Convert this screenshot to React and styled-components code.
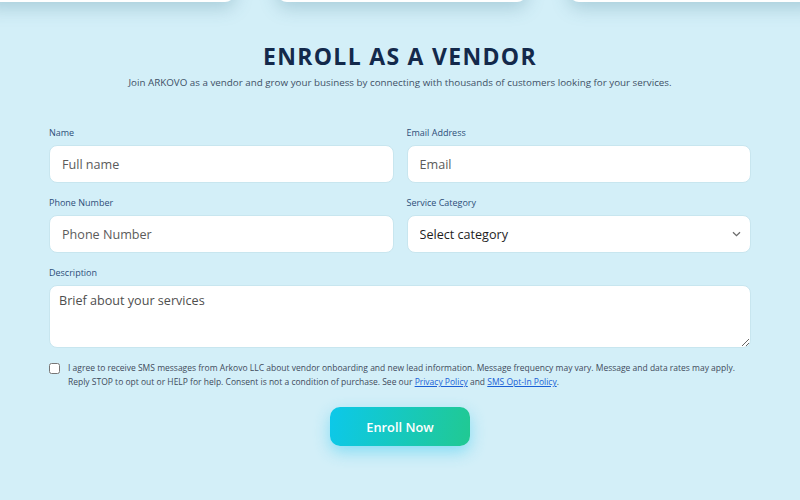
import React from 'react'
import styled, { createGlobalStyle } from 'styled-components'

const Global = createGlobalStyle`
  html, body { margin: 0; padding: 0; }
  body {
    background: #d3eff8;
    font-family: "Open Sans", "Liberation Sans", sans-serif;
    overflow: hidden;
  }
`

const Page = styled.div`
  width: 800px;
  height: 500px;
  background: #d3eff8;
  overflow: hidden;
`

const CardRow = styled.div`
  display: grid;
  grid-template-columns: 252px 250px 252px;
  gap: 42px;
  margin: -60px 0 0 -17px;
`

const TopCard = styled.div`
  height: 62px;
  background: #ffffff;
  border-radius: 10px;
  box-shadow: 0 6px 18px rgba(60, 120, 140, 0.28);
`

const Section = styled.section`
  padding: 34px 49px 0 49px;
`

const Title = styled.h2`
  margin: 0;
  text-align: center;
  font-family: "Open Sans", sans-serif;
  font-weight: 700;
  font-size: 23px;
  letter-spacing: 1.3px;
  color: #13294b;
  line-height: 40px;
`

const Subtitle = styled.p`
  margin: 0;
  text-align: center;
  font-size: 9.8px;
  color: #3e4f66;
  line-height: 14px;
`

const Form = styled.form`
  margin-top: 36px;
  display: grid;
  grid-template-columns: 1fr 1fr;
  column-gap: 13px;
  row-gap: 13px;
`

const Field = styled.div`
  display: flex;
  flex-direction: column;
  grid-column: ${p => (p.$full ? '1 / -1' : 'auto')};
`

const Label = styled.label`
  font-size: 9px;
  font-weight: 500;
  color: #2d4e78;
  line-height: 14px;
  margin-bottom: 5px;
`

const Input = styled.input`
  box-sizing: border-box;
  height: 38px;
  border: 1px solid #c8e6ef;
  border-radius: 8px;
  background: #ffffff;
  padding: 0 12px;
  font-family: inherit;
  font-size: 12.6px;
  color: #222;
  outline: none;
  &::placeholder { color: #5b5b5b; }
`

const SelectWrap = styled.div`
  position: relative;
`

const Select = styled.select`
  box-sizing: border-box;
  width: 100%;
  height: 38px;
  border: 1px solid #c8e6ef;
  border-radius: 8px;
  background: #ffffff;
  padding: 0 12px;
  font-family: inherit;
  font-size: 12.6px;
  color: #1e1e1e;
  appearance: none;
  outline: none;
`

const Chevron = styled.svg`
  position: absolute;
  right: 10px;
  top: 16px;
  pointer-events: none;
`

const TextArea = styled.textarea`
  box-sizing: border-box;
  height: 63px;
  border: 1px solid #c8e6ef;
  border-radius: 8px;
  background: #ffffff;
  padding: 6px 9px;
  font-family: inherit;
  font-size: 12.6px;
  color: #222;
  outline: none;
  resize: vertical;
  &::placeholder { color: #4e4e4e; }
`

const Consent = styled.div`
  grid-column: 1 / -1;
  display: flex;
  align-items: flex-start;
  gap: 8px;
  margin-top: 0;
`

const Check = styled.input`
  margin: 2px 0 0 0;
  width: 11px;
  height: 11px;
  flex: none;
`

const ConsentText = styled.p`
  margin: 0;
  font-size: 8.5px;
  line-height: 14px;
  color: #3f4b5c;
`

const Link = styled.a`
  color: #1b5fd6;
  text-decoration: underline;
`

const ButtonRow = styled.div`
  grid-column: 1 / -1;
  display: flex;
  justify-content: center;
  margin-top: 5px;
`

const Button = styled.button`
  width: 140px;
  height: 39px;
  border: none;
  border-radius: 10px;
  background: linear-gradient(100deg, #0cc8ea 0%, #21c992 100%);
  color: #ffffff;
  font-family: inherit;
  font-weight: 600;
  font-size: 12.8px;
  box-shadow: 0 6px 16px rgba(40, 200, 240, 0.45);
  cursor: pointer;
`

export default function App() {
  return (
    <Page>
      <Global />
      <CardRow>
        <TopCard />
        <TopCard />
        <TopCard />
      </CardRow>
      <Section>
        <Title>ENROLL AS A VENDOR</Title>
        <Subtitle>
          Join ARKOVO as a vendor and grow your business by connecting with thousands of customers looking for your services.
        </Subtitle>
        <Form onSubmit={e => e.preventDefault()}>
          <Field>
            <Label>Name</Label>
            <Input placeholder="Full name" />
          </Field>
          <Field>
            <Label>Email Address</Label>
            <Input placeholder="Email" />
          </Field>
          <Field>
            <Label>Phone Number</Label>
            <Input placeholder="Phone Number" />
          </Field>
          <Field>
            <Label>Service Category</Label>
            <SelectWrap>
              <Select defaultValue="">
                <option value="">Select category</option>
              </Select>
              <Chevron width="9" height="6" viewBox="0 0 9 6">
                <path d="M1 1.2 L4.5 4.6 L8 1.2" fill="none" stroke="#6b6b6b" strokeWidth="1.3" />
              </Chevron>
            </SelectWrap>
          </Field>
          <Field $full>
            <Label>Description</Label>
            <TextArea placeholder="Brief about your services" />
          </Field>
          <Consent>
            <Check type="checkbox" />
            <ConsentText>
              I agree to receive SMS messages from Arkovo LLC about vendor onboarding and new lead information. Message frequency may vary. Message and data rates may apply. Reply STOP to opt out or HELP for help. Consent is not a condition of purchase. See our <Link href="#">Privacy Policy</Link> and <Link href="#">SMS Opt-In Policy</Link>.
            </ConsentText>
          </Consent>
          <ButtonRow>
            <Button type="submit">Enroll Now</Button>
          </ButtonRow>
        </Form>
      </Section>
    </Page>
  )
}
